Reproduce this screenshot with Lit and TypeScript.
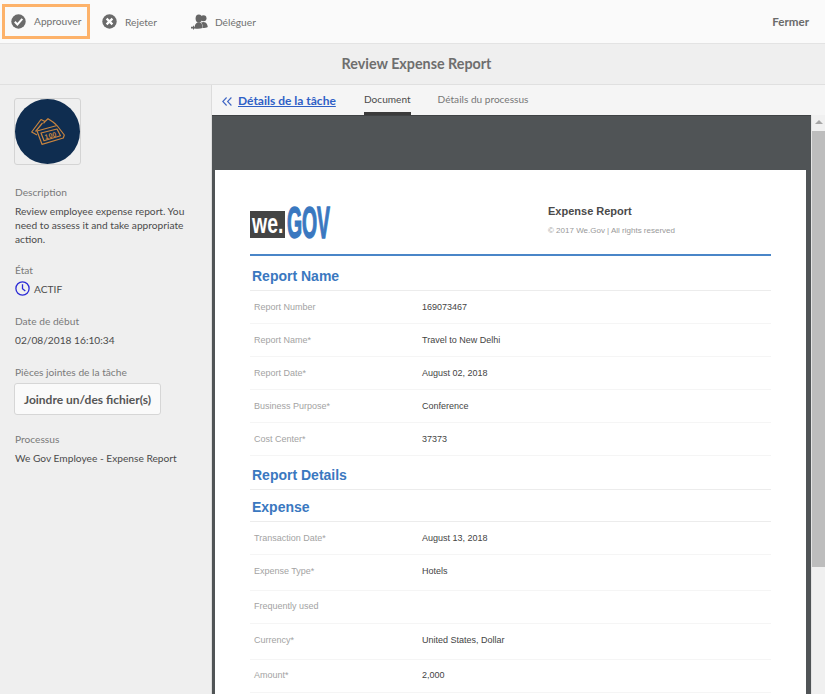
import { LitElement, css, html, svg } from "lit";
import { customElement } from "lit/decorators.js";

type Row = { label: string; value?: string; tall?: boolean };

const reportRows: Row[] = [
  { label: "Report Number", value: "169073467" },
  { label: "Report Name*", value: "Travel to New Delhi" },
  { label: "Report Date*", value: "August 02, 2018" },
  { label: "Business Purpose*", value: "Conference" },
  { label: "Cost Center*", value: "37373" },
];

const expenseRows: Row[] = [
  { label: "Transaction Date*", value: "August 13, 2018" },
  { label: "Expense Type*", value: "Hotels", tall: true },
  { label: "Frequently used" },
  { label: "Currency*", value: "United States, Dollar", tall: true },
  { label: "Amount*", value: "2,000" },
];

const checkIcon = svg`<svg width="15" height="15" viewBox="0 0 15 15"><circle cx="7.5" cy="7.5" r="7.2" fill="#6b6b6b"/><path d="M3.8 7.8l2.6 2.7 4.9-5.6" fill="none" stroke="#fff" stroke-width="2"/></svg>`;
const crossIcon = svg`<svg width="15" height="15" viewBox="0 0 15 15"><circle cx="7.5" cy="7.5" r="7.2" fill="#6b6b6b"/><path d="M4.6 4.6l5.8 5.8M10.4 4.6l-5.8 5.8" fill="none" stroke="#fff" stroke-width="2.2"/></svg>`;
const delegateIcon = svg`<svg width="17" height="16" viewBox="0 0 17 16" fill="#666"><circle cx="12.5" cy="4.2" r="3"/><path d="M10 8.500c1.500-.8 3.500-.8 4.500 0 1.200.8 2 2.500 2.300 4.500-1.300.7-3 1-4.800 1 0-2.200-.6-4-2-5.500z"/><ellipse cx="7.800" cy="4.500" rx="3.200" ry="4"/><path d="M3.500 14.500c0-3 .8-5 2.800-6 1-.4 2-.4 3 0 1.700 1 2.400 3 2.400 5.600-2.600.8-5.400.9-8.200.4z"/><path d="M0 12.800h2v-1.500l2.200 2.400-2.200 2.200v-1.500H0z"/></svg>`;
const clockIcon = svg`<svg width="15" height="15" viewBox="0 0 15 15" fill="none" stroke="#2b2bd6"><circle cx="7.500" cy="7.500" r="6.600" stroke-width="1.300"/><path d="M7.500 3.200v4.500l2.800 2.400" stroke-width="1.300"/></svg>`;
const moneyIcon = svg`<svg width="34" height="27" viewBox="0 0 34 27" fill="none" stroke="#c9853f" stroke-width="1.200" stroke-linejoin="round"><path d="M6 17L.7 14 10 1.500l4 2L17 .7l5 3.300 3.500 3"/><path d="M4.500 13.500L11.500 5M14 3.500l-1.500 1.800"/><path d="M6 13L26 7.500 33.300 17l-1 3L11 26.300z"/><path d="M10 15l16-4 3.500 6.800-16.500 5z"/><text x="19.500" y="20" font-family="Liberation Sans, sans-serif" font-size="7" font-weight="700" fill="#c9853f" stroke="none" text-anchor="middle" transform="rotate(-15 19.500 18)">100</text></svg>`;
const chevronsIcon = svg`<svg width="10" height="9" viewBox="0 0 10 9" fill="none" stroke="#3f66c4" stroke-width="1.100"><path d="M4.600.5L.8 4.500l3.800 4M9.400.5L5.600 4.500l3.800 4"/></svg>`;

@customElement("app-root")
export class AppRoot extends LitElement {
  renderRow(row: Row) {
    return html`<div class="row ${row.tall ? "tall" : ""}">
      <span class="row-label">${row.label}</span>
      <span class="row-value">${row.value ?? ""}</span>
    </div>`;
  }

  render() {
    return html`<div class="app">
      <header class="toolbar">
        <div class="action highlighted">${checkIcon}<span>Approuver</span></div>
        <div class="action reject">${crossIcon}<span>Rejeter</span></div>
        <div class="action delegate">${delegateIcon}<span>Déléguer</span></div>
        <div class="close">Fermer</div>
      </header>
      <div class="title-bar">Review Expense Report</div>
      <div class="content">
        <aside class="sidebar">
          <div class="tile"><div class="disc">${moneyIcon}</div></div>
          <div class="field first">
            <div class="field-label">Description</div>
            <div class="field-text">
              Review employee expense report. You need to assess it and take
              appropriate action.
            </div>
          </div>
          <div class="field">
            <div class="field-label">État</div>
            <div class="field-value status">${clockIcon}<span>ACTIF</span></div>
          </div>
          <div class="field">
            <div class="field-label">Date de début</div>
            <div class="field-value">02/08/2018 16:10:34</div>
          </div>
          <div class="field">
            <div class="field-label">Pièces jointes de la tâche</div>
            <div class="attach">Joindre un/des fichier(s)</div>
          </div>
          <div class="field">
            <div class="field-label">Processus</div>
            <div class="field-value">We Gov Employee - Expense Report</div>
          </div>
        </aside>
        <main class="main">
          <nav class="tabs">
            <span class="chevrons">${chevronsIcon}</span>
            <a class="back">Détails de la tâche</a>
            <span class="tab active">Document</span>
            <span class="tab">Détails du processus</span>
          </nav>
          <div class="viewer">
            <div class="pane">
              <div class="page">
                <div class="doc-head">
                  <div class="logo">
                    <span class="logo-we"><span>we.</span></span>
                    <span class="logo-gov">GOV</span>
                  </div>
                  <div class="doc-title">
                    <div class="doc-name">Expense Report</div>
                    <div class="doc-copy">© 2017 We.Gov | All rights reserved</div>
                  </div>
                </div>
                <h2 class="first-heading">Report Name</h2>
                ${reportRows.map((r) => this.renderRow(r))}
                <h2 class="details">Report Details</h2>
                <h2 class="expense">Expense</h2>
                ${expenseRows.map((r) => this.renderRow(r))}
              </div>
            </div>
            <div class="scrollbar">
              <div class="arrow"></div>
              <div class="thumb"></div>
            </div>
          </div>
        </main>
      </div>
    </div>`;
  }

  static styles = css`
    :host {
      display: block;
      height: 694px;
      overflow: hidden;
      font-family: Lato, "Open Sans", sans-serif;
      color: #4b4b4b;
    }
    .app {
      height: 694px;
      display: flex;
      flex-direction: column;
      overflow: hidden;
    }
    .toolbar {
      height: 43px;
      flex: none;
      display: flex;
      align-items: center;
      background: #fafafa;
      border-bottom: 1px solid #e3e3e3;
      font-size: 10.2px;
      color: #707070;
    }
    .action {
      display: flex;
      align-items: center;
      gap: 8px;
    }
    .highlighted {
      box-sizing: border-box;
      height: 35px;
      width: 88px;
      margin-left: 2px;
      padding-left: 6px;
      margin-top: -1px;
      border: 3px solid #fdb26a;
    }
    .reject {
      margin-left: 12px;
    }
    .delegate {
      margin-left: 34px;
      gap: 7px;
    }
    .close {
      margin-left: auto;
      margin-right: 16px;
      font-weight: 700;
      font-size: 11.6px;
      color: #6a6a6a;
    }
    .title-bar {
      height: 41px;
      flex: none;
      box-sizing: border-box;
      display: flex;
      align-items: center;
      justify-content: center;
      padding: 0 0 2px 8px;
      background: #efefef;
      border-bottom: 1px solid #e0e0e0;
      font-size: 14.3px;
      font-weight: 700;
      color: #6e6e6e;
    }
    .content {
      flex: 1;
      display: flex;
      min-height: 0;
    }
    .sidebar {
      width: 212px;
      flex: none;
      box-sizing: border-box;
      padding: 13px 14px 0;
      background: #efefef;
      border-right: 1px solid #dcdcdc;
      font-size: 10.2px;
    }
    .tile {
      box-sizing: border-box;
      width: 67px;
      height: 67px;
      border: 1px solid #d4d4d4;
      border-radius: 3px;
      display: flex;
      align-items: center;
      justify-content: center;
    }
    .disc {
      width: 65px;
      height: 65px;
      border-radius: 50%;
      background: #0f2d50;
      display: flex;
      align-items: center;
      justify-content: center;
    }
    .field {
      margin-top: 18px;
      padding-left: 1px;
    }
    .first {
      margin-top: 20px;
    }
    .field-label {
      line-height: 14px;
      color: #7a7a7a;
    }
    .field-text {
      margin-top: 5px;
      margin-bottom: -1px;
      line-height: 14px;
      color: #4b4b4b;
    }
    .field-value {
      margin-top: 5px;
      line-height: 14px;
      color: #4b4b4b;
    }
    .status {
      display: flex;
      align-items: center;
      gap: 4px;
      margin-top: 4px;
    }
    .attach {
      box-sizing: border-box;
      width: 147px;
      height: 32px;
      margin: 4px 0 -1px -1px;
      display: flex;
      align-items: center;
      justify-content: center;
      background: #fafafa;
      border: 1px solid #d6d6d6;
      border-radius: 3px;
      font-size: 12px;
      font-weight: 700;
      color: #555;
    }
    .main {
      flex: 1;
      min-width: 0;
      display: flex;
      flex-direction: column;
    }
    .tabs {
      height: 30px;
      flex: none;
      box-sizing: border-box;
      display: flex;
      align-items: stretch;
      background: #f5f5f5;
      font-size: 10.1px;
      color: #777;
      padding-left: 10px;
    }
    .chevrons {
      width: 16px;
      display: flex;
      align-items: center;
      padding-top: 3px;
      box-sizing: border-box;
    }
    .back {
      line-height: 32px;
      font-size: 12px;
      font-weight: 700;
      color: #2f60c6;
      text-decoration: underline;
      width: 126px;
    }
    .tab {
      line-height: 28px;
      margin-right: 27px;
      border-bottom: 3px solid transparent;
      box-sizing: border-box;
    }
    .active {
      color: #4b4b4b;
      border-bottom-color: #3b3b3b;
    }
    .viewer {
      flex: 1;
      min-height: 0;
      display: flex;
    }
    .pane {
      flex: 1;
      min-width: 0;
      box-sizing: border-box;
      padding: 54px 5px 0 3px;
      background: #505456;
      border-top: 1px solid #3f4244;
      overflow: hidden;
    }
    .page {
      background: #fff;
      padding: 35px 35px 0;
      height: 600px;
      font-family: "Liberation Sans", Arial, sans-serif;
    }
    .doc-head {
      height: 49px;
      display: flex;
      border-bottom: 2px solid #4a86c8;
    }
    .logo {
      width: 298px;
      height: 34px;
      display: flex;
      align-items: flex-start;
      gap: 2px;
      flex: none;
    }
    .logo-we {
      width: 35px;
      height: 27px;
      margin-top: 6px;
      display: flex;
      justify-content: center;
      background: #444;
      color: #fff;
      font-size: 27px;
      font-weight: 700;
      line-height: 26px;
    }
    .logo-we span {
      flex: none;
      transform: scaleX(0.72);
      transform-origin: center;
    }
    .logo-gov {
      display: inline-block;
      font-size: 44px;
      line-height: 36px;
      font-weight: 700;
      color: #3a78c0;
      -webkit-text-stroke: 1.5px #3a78c0;
      transform: scaleX(0.44);
      transform-origin: left center;
    }
    .doc-name {
      margin-top: -1px;
      font-size: 11px;
      font-weight: 700;
      line-height: 14px;
      color: #4a4a4a;
    }
    .doc-copy {
      margin-top: 7px;
      font-size: 8px;
      line-height: 12px;
      color: #999;
    }
    h2 {
      margin: 0;
      padding-left: 2px;
      font-size: 14px;
      font-weight: 700;
      color: #3a78c0;
      border-bottom: 1px solid #ececec;
      box-sizing: border-box;
    }
    .first-heading {
      height: 35px;
      line-height: 40px;
    }
    .details {
      height: 34px;
      line-height: 38px;
    }
    .expense {
      height: 32px;
      line-height: 35px;
    }
    .row {
      height: 33px;
      box-sizing: border-box;
      display: flex;
      align-items: center;
      border-bottom: 1px solid #f5f5f5;
      font-size: 9px;
    }
    .tall {
      height: 36px;
      padding-bottom: 3px;
    }
    .tall + .row {
      padding-bottom: 2px;
    }
    .row-label {
      width: 172px;
      padding-left: 4px;
      box-sizing: border-box;
      color: #a3a3a3;
    }
    .row-value {
      color: #444;
    }
    .scrollbar {
      width: 14px;
      flex: none;
      background: #f0f0f0;
      border-left: 1px solid #e4e4e4;
      box-sizing: border-box;
    }
    .arrow {
      width: 0;
      margin: 5px auto 0;
      border-left: 4px solid transparent;
      border-right: 4px solid transparent;
      border-bottom: 4px solid #a6a6a6;
    }
    .thumb {
      height: 436px;
      margin-top: 7px;
      background: #bdbdbd;
    }
  `;
}
